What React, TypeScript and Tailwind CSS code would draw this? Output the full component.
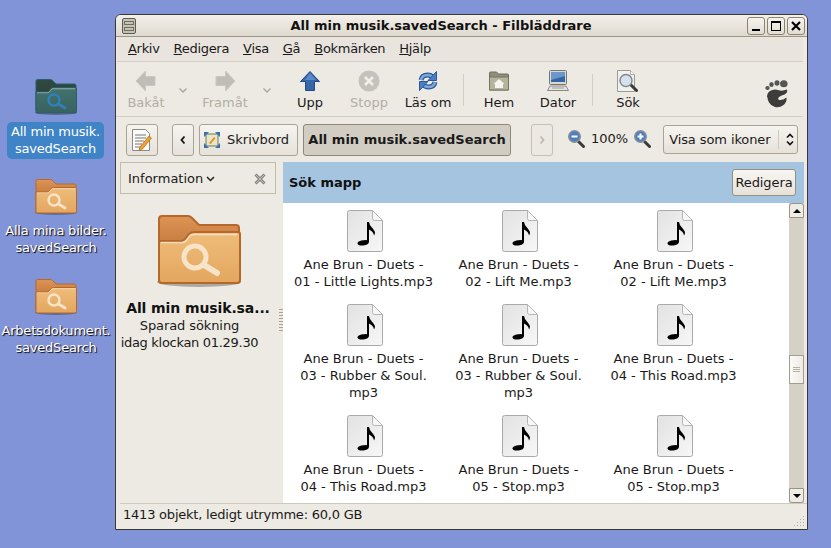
const FONT = 'font-["DejaVu_Sans",sans-serif]';

const FILES = [
  ['Ane Brun - Duets -', '01 - Little Lights.mp3'],
  ['Ane Brun - Duets -', '02 - Lift Me.mp3'],
  ['Ane Brun - Duets -', '02 - Lift Me.mp3'],
  ['Ane Brun - Duets -', '03 - Rubber & Soul.', 'mp3'],
  ['Ane Brun - Duets -', '03 - Rubber & Soul.', 'mp3'],
  ['Ane Brun - Duets -', '04 - This Road.mp3'],
  ['Ane Brun - Duets -', '04 - This Road.mp3'],
  ['Ane Brun - Duets -', '05 - Stop.mp3'],
  ['Ane Brun - Duets -', '05 - Stop.mp3'],
];

const MENU = [
  ['A', 'rkiv'],
  ['R', 'edigera'],
  ['V', 'isa'],
  ['G', 'å'],
  ['B', 'okmärken'],
  ['H', 'jälp'],
];

// Saved-search folder, drawn on an 84x76 grid and scaled by the width prop
function SearchFolder({ width, dark = false, id }: { width: number; dark?: boolean; id: string }) {
  const edge = dark ? '#2f5a6a' : '#b5682a';
  const glass = dark ? '#2f7fb8' : '#f7e3c8';
  return (
    <svg width={width} height={(width * 76) / 84} viewBox="0 0 84 76" className="block">
      <defs>
        <linearGradient id={`${id}-back`} x1="0" y1="0" x2="0" y2="1">
          <stop offset="0" stopColor={dark ? '#2f4a40' : '#dd9455'} />
          <stop offset="1" stopColor={dark ? '#263c34' : '#aa5f26'} />
        </linearGradient>
        <linearGradient id={`${id}-front`} x1="0" y1="0" x2="0" y2="1">
          <stop offset="0" stopColor={dark ? '#42736f' : '#efbd7a'} />
          <stop offset="1" stopColor={dark ? '#38625f' : '#e3a65f'} />
        </linearGradient>
      </defs>
      <ellipse cx="42" cy="69" rx="42" ry="5" fill="#000" opacity="0.28" />
      <path d="M2 6q0-3 3-3h26q2 0 4 2l7 7h37q3 0 3 3v50H2z" fill={`url(#${id}-back)`} stroke={edge} strokeWidth="2" />
      <path d="M2 28h22q3 0 5-3l3-4q2-2 5-2h44q2 0 2 2v46q0 3-3 3H5q-3 0-3-3z" fill={`url(#${id}-front)`} stroke={edge} strokeWidth="2" />
      <path d="M4 29.500h21q3 0 5-3l3-4q1-1 4-1h43" fill="none" stroke="#fff" strokeOpacity="0.55" strokeWidth="1.500" />
      <circle cx="38" cy="44" r="11" fill="none" stroke={glass} strokeWidth="5" />
      <path d="M47 52l13 8" stroke={glass} strokeWidth="6" strokeLinecap="round" />
    </svg>
  );
}

function MusicFile() {
  return (
    <svg width="36" height="42" viewBox="0 0 36 42" className="block">
      <defs>
        <linearGradient id="page" x1="0" y1="0" x2="1" y2="1">
          <stop offset="0" stopColor="#e2e2e2" />
          <stop offset="1" stopColor="#f7f7f7" />
        </linearGradient>
      </defs>
      <path d="M2.500 .5h23l10 10v29q0 2-2 2h-31q-2 0-2-2v-37q0-2 2-2z" fill="url(#page)" stroke="#a9a9a5" />
      <path d="M25.500 .5v8q0 2 2 2h8z" fill="#f7f7f7" stroke="#b5b5b1" />
      <path d="M20 12h2q.5 3 2.500 5t3.500 5q0 2-1 3.500q-.5-4-5-6v12q0 2.500-3.500 3.500q-4 1.200-7 0q-2-1.500-.5-3q2.500-2 8-2q.8 0 1 .3z" fill="#000" />
    </svg>
  );
}

function ArrowIcon({ dir }: { dir: 'left' | 'right' }) {
  return (
    <svg width="20" height="20" viewBox="0 0 20 20" className="block">
      <path d={dir === 'left' ? 'M0 10L9.500 0v5.500H19v9H9.500V20z' : 'M20 10L10.500 0v5.500H1v9h9.500V20z'} fill="#bfbdb8" stroke="#c9c7c1" />
    </svg>
  );
}

function UpIcon() {
  return (
    <svg width="20" height="20" viewBox="0 0 20 20" className="block">
      <path d="M10 .5L19.500 10.500H14.500V19.500H5.500V10.500H.5z" fill="#3566a8" stroke="#204a87" />
      <path d="M10 2L16 9H5z" fill="#5a8bc8" />
    </svg>
  );
}

function StopIcon() {
  return (
    <svg width="22" height="22" viewBox="0 0 22 22" className="block">
      <circle cx="11" cy="11" r="10.500" fill="#c4c2bd" />
      <path d="M7 7l8 8M15 7l-8 8" stroke="#f1efea" strokeWidth="2.500" />
    </svg>
  );
}

function ReloadIcon() {
  return (
    <svg width="20" height="20" viewBox="0 0 20 20" className="block">
      <path d="M3 9Q4 4 9.500 4Q13 4 15 6.500" fill="none" stroke="#2a5a9c" strokeWidth="5" />
      <path d="M3 9Q4 4 9.500 4Q13 4 15 6.500" fill="none" stroke="#7fa8d8" strokeWidth="2.500" />
      <path d="M18.500 .5v9h-8.500z" fill="#4a7fc0" stroke="#2a5a9c" />
      <path d="M17 11Q16 16 10.500 16Q7 16 5 13.500" fill="none" stroke="#2a5a9c" strokeWidth="5" />
      <path d="M17 11Q16 16 10.500 16Q7 16 5 13.500" fill="none" stroke="#7fa8d8" strokeWidth="2.500" />
      <path d="M1.500 19.500v-9h8.500z" fill="#4a7fc0" stroke="#2a5a9c" />
    </svg>
  );
}

function HomeIcon() {
  return (
    <svg width="20" height="20" viewBox="0 0 20 20" className="block">
      <path d="M.5 2q0-1 1-1h6l2 2h9q1 0 1 1v15H.5z" fill="#8f8e78" stroke="#6f6e5c" />
      <path d="M.5 6h19v13H.5z" fill="#b4b39c" stroke="#77765f" />
      <path d="M10 8l5.500 5H14v4H6v-4H4.500z" fill="#f4f3ee" />
    </svg>
  );
}

function ComputerIcon() {
  return (
    <svg width="22" height="22" viewBox="0 0 22 22" className="block">
      <rect x="2.500" y=".5" width="17" height="14" rx="1" fill="#d9d9d5" stroke="#77776f" />
      <rect x="4" y="2" width="14" height="10" fill="#3465a4" />
      <path d="M4 2h14v4L4 10z" fill="#6d97ca" />
      <path d="M3 16h16l2.500 4.500H.5z" fill="#e6e6e1" stroke="#8a8a83" />
      <path d="M5 18h12" stroke="#9c9c95" />
    </svg>
  );
}

function Magnifier({ sign }: { sign: 'plus' | 'minus' }) {
  return (
    <svg width="17" height="18" viewBox="0 0 17 18" className="block">
      <path d="M10.500 11.500l5 5" stroke="#3a3a3a" strokeWidth="3" strokeLinecap="round" />
      <circle cx="6.500" cy="6.500" r="5.800" fill="#4e7fbd" stroke="#8b8f93" strokeWidth="1.400" />
      <path d="M3.500 6.500h6" stroke="#fff" strokeWidth="2" />
      {sign === 'plus' && <path d="M6.500 3.500v6" stroke="#fff" strokeWidth="2" />}
    </svg>
  );
}

function SearchDocIcon() {
  return (
    <svg width="22" height="22" viewBox="0 0 22 22" className="block">
      <path d="M.5 .5h13l4 4v17H.5z" fill="#f1f1ee" stroke="#9a9a95" />
      <path d="M13.500 .5v4h4" fill="#fff" stroke="#b0b0ab" />
      <path d="M13.500 14.500l6 6" stroke="#3a3a3a" strokeWidth="3" strokeLinecap="round" />
      <circle cx="9" cy="10.500" r="6" fill="#d5e2ee" stroke="#85898d" strokeWidth="1.500" />
    </svg>
  );
}

function NoteIcon() {
  return (
    <svg width="20" height="22" viewBox="0 0 20 22" className="block">
      <path d="M.5 .5h13l4 4v17H.5z" fill="#fbfbf9" stroke="#8a8a85" />
      <path d="M3 6h11M3 9h11M3 12h9M3 15h7M3 18h6" stroke="#777" />
      <path d="M8 18l9-11 2.500 2-9 11-3.500 1z" fill="#f0a030" stroke="#b06a10" strokeWidth=".7" />
    </svg>
  );
}

function DesktopPathIcon() {
  return (
    <svg width="16" height="16" viewBox="0 0 16 16" className="block">
      <rect x="2" y="2" width="12" height="12" fill="#e8e6c9" stroke="#6d7a55" />
      <path d="M5 11l5-6 1.500 1.200-5 6z" fill="#e6922c" />
      <path d="M0 0h5L0 5zM16 0h-5l5 5zM0 16h5L0 11zM16 16h-5l5-5z" fill="#3a6fb0" />
    </svg>
  );
}

function GnomeFoot() {
  return (
    <svg width="23" height="28" viewBox="0 0 23 28" className="block">
      <ellipse cx="2.500" cy="8" rx="2.200" ry="2" fill="#555553" />
      <ellipse cx="6.500" cy="4.500" rx="2.200" ry="2.500" fill="#555553" />
      <ellipse cx="12" cy="3" rx="2.500" ry="2.800" fill="#555553" />
      <ellipse cx="18.800" cy="3.800" rx="3.800" ry="3.500" fill="#555553" />
      <path d="M2 17q0-5 4-6.500q4-1.500 7-.5q4 1.500 9-.5q1 3-2.500 5q-4 1.200-6 3q-1 2 1 2.500q3 .5 7-2.500q.5 4.500-3 7.500q-4 3-8.500 2q-4-1-6-4.500q-1.500-3-1.500-5z" fill="#3c3c3a" />
    </svg>
  );
}

function FileItem({ lines }: { lines: string[] }) {
  return (
    <div className="flex flex-col items-center pb-[14px]">
      <div className="ml-[3px] mb-[4px]"><MusicFile /></div>
      <div className="text-center text-[13px] leading-[17px] text-[#1a1a1a] whitespace-nowrap">
        {lines.map((l, i) => <div key={i}>{l}</div>)}
      </div>
    </div>
  );
}

function ToolButton({ label, w, disabled = false, children }: { label: string; w: string; disabled?: boolean; children: React.ReactNode }) {
  return (
    <div className={`flex flex-col items-center shrink-0 ${w}`}>
      <div className="h-[24px] flex items-center justify-center">{children}</div>
      <div className={`mt-[1px] text-[13px] leading-[17px] ${disabled ? 'text-[#b3aea3]' : 'text-[#1a1a1a]'}`}>{label}</div>
    </div>
  );
}

function Chevron() {
  return (
    <svg width="8" height="5" viewBox="0 0 8 5">
      <path d="M.5 .5L4 4L7.500 .5" fill="none" stroke="#a8a49b" strokeWidth="1.300" />
    </svg>
  );
}

function ToolSep() {
  return <div className="w-[1px] h-[32px] bg-[#d3cec4] shrink-0 self-center" />;
}

function WindowButton({ children }: { children: React.ReactNode }) {
  return (
    <div className="w-[18px] h-[18px] rounded-[3px] border border-[#8b8270] bg-gradient-to-b from-[#f6f4ef] to-[#e2ddd3] flex items-center justify-center">
      {children}
    </div>
  );
}

function DesktopIcon({ id, top, first, second, selected = false }: { id: string; top: string; first: string; second: string; selected?: boolean }) {
  return (
    <div className={`absolute left-0 w-[112px] flex flex-col items-center ${top}`}>
      <SearchFolder id={id} width={42} dark={selected} />
      <div className={`mt-[6px] text-center text-[13px] leading-[17px] tracking-[-0.2px] text-white rounded-[5px] whitespace-nowrap ${selected ? 'w-[97px] -ml-[1px] h-[37px] pt-[1px] bg-[#3f84c6]' : '[text-shadow:1px_1px_1px_#000]'}`}>
        <div>{first}</div>
        <div>{second}</div>
      </div>
    </div>
  );
}

export default function App() {
  return (
    <div className={`relative w-[831px] h-[548px] overflow-hidden bg-[#8294d8] ${FONT}`}>
      <DesktopIcon id="d1" top="top-[78px]" first="All min musik." second="savedSearch" selected />
      <DesktopIcon id="d2" top="top-[178px]" first="Alla mina bilder." second="savedSearch" />
      <DesktopIcon id="d3" top="top-[278px]" first="Arbetsdokument." second="savedSearch" />

      {/* File manager window */}
      <div className="absolute left-[115px] top-[14px] w-[693px] h-[516px] flex flex-col border border-[#3a3833] rounded-t-[6px] bg-[#edeae3] overflow-hidden">
        {/* Title bar */}
        <div className="relative h-[22px] shrink-0 flex items-center justify-center pr-[41px] bg-gradient-to-b from-[#f3f0ea] to-[#dfdacf] border-b border-[#9d9686]">
          <div className="absolute left-[6px] top-[3px] w-[14px] h-[16px] rounded-[2px] border border-[#5d5c52] bg-[#c3c2b3] flex flex-col justify-center gap-[2px] px-[1px]">
            <div className="h-[4px] border border-[#6f6e62]" />
            <div className="h-[4px] border border-[#6f6e62]" />
          </div>
          <span className="text-[13px] font-bold text-[#111]">All min musik.savedSearch - Filbläddrare</span>
          <div className="absolute right-[2px] top-[2px] flex gap-[2px]">
            <WindowButton><div className="w-[8px] h-[2px] bg-black mt-[8px]" /></WindowButton>
            <WindowButton><div className="w-[10px] h-[10px] border border-black border-t-2" /></WindowButton>
            <WindowButton>
              <svg width="10" height="10" viewBox="0 0 10 10"><path d="M1 1l8 8M9 1l-8 8" stroke="#000" strokeWidth="2.200" /></svg>
            </WindowButton>
          </div>
        </div>

        {/* Menu */}
        <div className="h-[25px] shrink-0 mx-[1px] mr-[4px] flex items-center gap-[14px] pl-[11px] border-b border-[#d3cec4] bg-[#e9e5de] text-[13px] tracking-[-0.3px] text-[#1a1a1a]">
          {MENU.map(([key, rest]) => (
            <span key={key}><span className="underline">{key}</span>{rest}</span>
          ))}
        </div>

        {/* Toolbar */}
        <div className="h-[55px] shrink-0 mr-[4px] flex items-center pl-[3px] pt-[2px] border-b border-[#d3cec4]">
          <ToolButton label="Bakåt" w="w-[54px]" disabled><ArrowIcon dir="left" /></ToolButton>
          <div className="w-[20px] flex justify-center shrink-0"><Chevron /></div>
          <ToolButton label="Framåt" w="w-[64px]" disabled><ArrowIcon dir="right" /></ToolButton>
          <div className="w-[20px] flex justify-center shrink-0"><Chevron /></div>
          <div className="w-[4px] shrink-0" />
          <ToolButton label="Upp" w="w-[58px]"><UpIcon /></ToolButton>
          <div className="w-[1px] shrink-0" />
          <ToolButton label="Stopp" w="w-[58px]" disabled><StopIcon /></ToolButton>
          <div className="w-[1px] shrink-0" />
          <ToolButton label="Läs om" w="w-[58px]"><ReloadIcon /></ToolButton>
          <div className="w-[6px] shrink-0" />
          <ToolSep />
          <div className="w-[6px] shrink-0" />
          <ToolButton label="Hem" w="w-[58px]"><HomeIcon /></ToolButton>
          <div className="w-[1px] shrink-0" />
          <ToolButton label="Dator" w="w-[58px]"><ComputerIcon /></ToolButton>
          <div className="w-[5px] shrink-0" />
          <ToolSep />
          <div className="w-[6px] shrink-0" />
          <ToolButton label="Sök" w="w-[58px]"><SearchDocIcon /></ToolButton>
          <div className="w-[108px] shrink-0" />
          <div className="mt-[7px]"><GnomeFoot /></div>
        </div>

        {/* Location bar */}
        <div className="h-[44px] shrink-0 flex items-start pt-[7px] pl-[10px] text-[13px] text-[#1a1a1a]">
          <div className="w-[32px] h-[32px] rounded-[3px] border border-[#a9a393] bg-gradient-to-b from-[#f6f4ef] to-[#e6e2da] flex items-center justify-center shrink-0">
            <NoteIcon />
          </div>
          <div className="ml-[14px] w-[22px] h-[32px] rounded-[3px] border border-[#a9a393] bg-gradient-to-b from-[#f6f4ef] to-[#e6e2da] flex items-center justify-center shrink-0">
            <svg width="6" height="10" viewBox="0 0 6 10"><path d="M4.500 1.500L1.500 5l3 3.500" fill="none" stroke="#111" strokeWidth="1.800" /></svg>
          </div>
          <div className="ml-[5px] w-[99px] h-[32px] rounded-[3px] border border-[#a9a393] bg-gradient-to-b from-[#f6f4ef] to-[#e6e2da] flex items-center pl-[4px] gap-[7px] shrink-0">
            <DesktopPathIcon />
            <span>Skrivbord</span>
          </div>
          <div className="ml-[5px] w-[208px] h-[32px] rounded-[3px] border border-[#8f8876] bg-[#d2cdc3] flex items-center justify-center font-bold shrink-0">
            All min musik.savedSearch
          </div>
          <div className="ml-[20px] w-[22px] h-[32px] rounded-[3px] border border-[#c6c0b3] bg-[#ece9e2] flex items-center justify-center shrink-0">
            <svg width="6" height="10" viewBox="0 0 6 10"><path d="M1.500 1.500L4.500 5l-3 3.500" fill="none" stroke="#bdb8ac" strokeWidth="1.800" /></svg>
          </div>
          <div className="ml-[15px] h-[30px] flex items-center shrink-0">
            <Magnifier sign="minus" />
            <span className="ml-[6px]">100%</span>
            <div className="ml-[6px]"><Magnifier sign="plus" /></div>
          </div>
          <div className="ml-[12px] w-[135px] h-[29px] mt-[1px] rounded-[3px] border border-[#a9a393] bg-gradient-to-b from-[#f6f4ef] to-[#e6e2da] flex items-center pl-[5px] shrink-0">
            <span className="whitespace-nowrap tracking-[-0.1px]">Visa som ikoner</span>
            <div className="ml-[7px] w-[1px] h-[19px] bg-[#cfcabf]" />
            <svg width="8" height="13" viewBox="0 0 8 13" className="ml-[7px]"><path d="M1 4.500L4 1.500l3 3M1 8.500l3 3 3-3" fill="none" stroke="#111" strokeWidth="1.600" /></svg>
          </div>
        </div>

        {/* Panes */}
        <div className="flex-1 min-h-0 flex ml-[1px] mr-[3px] mt-[1px]">
          {/* Side pane */}
          <div className="relative w-[166px] shrink-0 flex flex-col pl-[3px] text-[13px] text-[#1a1a1a]">
            <div className="w-[156px] h-[32px] border border-[#c2bcab] flex items-center pl-[7px] pr-[6px] pt-[1px]">
              <span>Information</span>
              <svg width="9" height="6" viewBox="0 0 9 6" className="ml-[3px]"><path d="M1 1l3.500 3.500L8 1" fill="none" stroke="#222" strokeWidth="1.500" /></svg>
              <svg width="12" height="12" viewBox="0 0 12 12" className="ml-auto mr-[3px]"><path d="M1.500 1.500l9 9M10.500 1.500l-9 9" stroke="#85827a" strokeWidth="3" /><path d="M1.500 1.500l9 9M10.500 1.500l-9 9" stroke="#c4c2bb" strokeWidth="1" /></svg>
            </div>
            <div className="ml-[37px] mt-[19px]"><SearchFolder id="side" width={84} /></div>
            <div className="w-[156px] mt-[9px] text-center text-[14px] leading-[20px] tracking-[-0.1px] font-bold text-[#111] whitespace-nowrap">All min musik.sa...</div>
            <div className="w-[139px] mt-[-1px] text-center leading-[17px] whitespace-nowrap">
              <div className="tracking-[-0.1px]">Sparad sökning</div>
              <div className="tracking-[-0.3px]">idag klockan 01.29.30</div>
            </div>
            <div className="absolute right-0 top-[146px] w-[4px] h-[24px] [background-image:radial-gradient(#a8a394_0.6px,transparent_0.8px)] [background-size:2px_3px]" />
          </div>

          {/* Main pane */}
          <div className="flex-1 min-w-0 flex flex-col bg-white">
            <div className="h-[41px] shrink-0 bg-[#a5c4e0] flex items-center pl-[6px] pr-[8px]">
              <span className="text-[13px] font-bold text-[#111]">Sök mapp</span>
              <div className="ml-auto w-[64px] h-[27px] rounded-[3px] border border-[#96907f] bg-gradient-to-b from-[#f8f6f2] to-[#e6e2da] flex items-center justify-center text-[13px] tracking-[-0.1px] text-[#1a1a1a]">
                Redigera
              </div>
            </div>
            <div className="flex-1 min-h-0 flex">
              <div className="flex-1 min-w-0 overflow-hidden pt-[7px] pl-[3px]">
                <div className="grid grid-cols-[155px_155px_155px] items-start">
                  {FILES.map((lines, i) => <FileItem key={i} lines={lines} />)}
                </div>
              </div>
              {/* Scrollbar */}
              <div className="w-[15px] shrink-0 bg-[#d6d1c7] flex flex-col">
                <div className="h-[15px] shrink-0 rounded-t-[3px] border border-[#9a9484] bg-[#efece6] flex items-center justify-center">
                  <div className="w-0 h-0 border-x-[4px] border-x-transparent border-b-[4px] border-b-black" />
                </div>
                <div className="h-[137px] shrink-0" />
                <div className="h-[29px] shrink-0 border border-[#a49e8e] bg-gradient-to-r from-[#fbfaf8] to-[#eeebe4] flex flex-col items-center justify-center gap-[1px]">
                  <div className="w-[7px] h-[1px] bg-[#b5b0a3]" />
                  <div className="w-[7px] h-[1px] bg-[#b5b0a3]" />
                  <div className="w-[7px] h-[1px] bg-[#b5b0a3]" />
                </div>
                <div className="flex-1" />
                <div className="h-[15px] shrink-0 rounded-b-[3px] border border-[#9a9484] bg-[#efece6] flex items-center justify-center">
                  <div className="w-0 h-0 border-x-[4px] border-x-transparent border-t-[4px] border-t-black" />
                </div>
              </div>
            </div>
          </div>
        </div>

        {/* Status bar */}
        <div className="relative h-[26px] shrink-0 ml-[4px] border-t border-[#cfcabe] flex items-center pl-[3px] pb-[3px] text-[13px] tracking-[-0.22px] text-[#1a1a1a]">
          1413 objekt, ledigt utrymme: 60,0 GB
          <div className="absolute right-[3px] bottom-[3px] w-[11px] h-[11px] [background-image:radial-gradient(#b3ae9f_1px,transparent_1px)] [background-size:3px_3px] [clip-path:polygon(100%_0,100%_100%,0_100%)]" />
        </div>
      </div>
    </div>
  );
}
